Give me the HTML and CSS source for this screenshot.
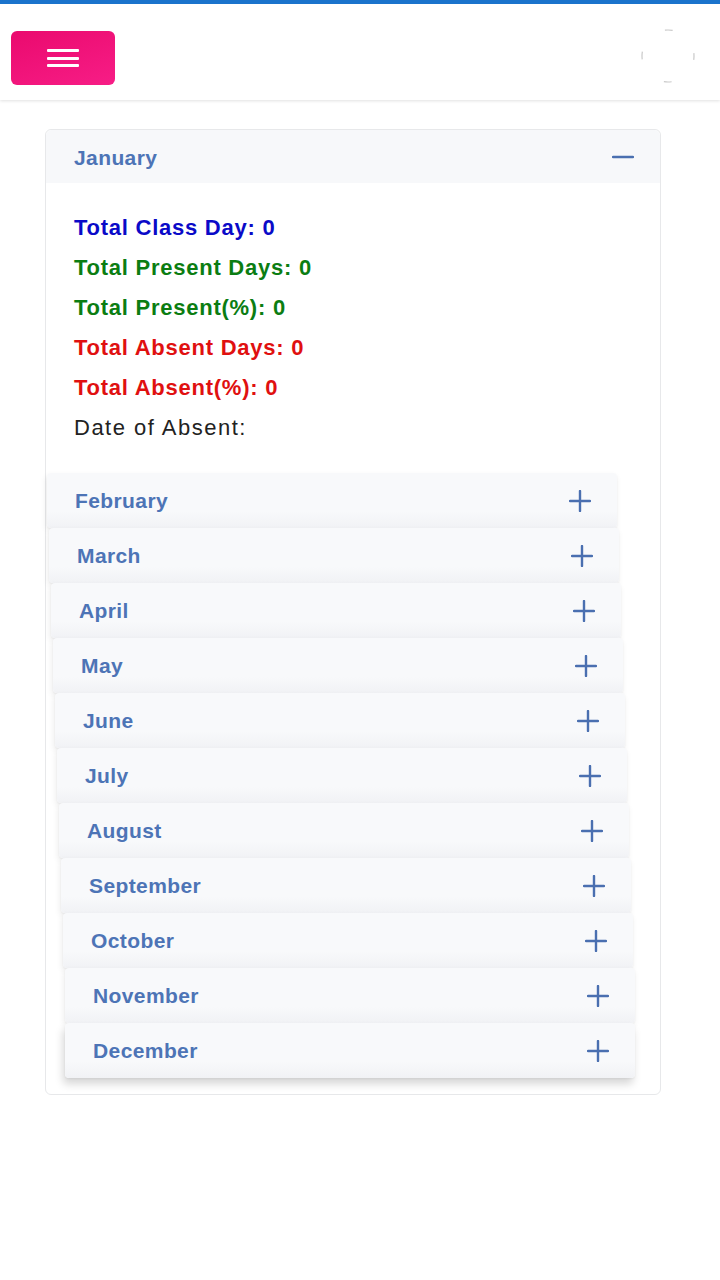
FILE: index.html
```html
<!DOCTYPE html>
<html lang="en">

<head>
    <meta charset="UTF-8">
    <meta name="viewport" content="width=device-width, initial-scale=1.0">
    <title>Attendance</title>
    <link rel="stylesheet" href="styles.css">
</head>

<body>
    <!-- top bar -->
    <header class="topbar">
        <button class="menu-btn" aria-label="menu">
            <span></span><span></span><span></span>
        </button>
        <div class="avatar">
            <svg width="56" height="56" viewBox="0 0 56 56">
                <circle cx="28" cy="28" r="26" fill="none" stroke="#c9c9c9" stroke-width="1.2"
                    stroke-dasharray="8 32.84" stroke-dashoffset="4"></circle>
            </svg>
        </div>
    </header>

    <main class="content">
        <div class="card">
            <div class="card-header">
                <span class="month-name">January</span>
                <svg class="icon" width="22" height="22" viewBox="0 0 22 22">
                    <path d="M1 11h20" stroke="#4a6fb0" stroke-width="2.4" stroke-linecap="round"></path>
                </svg>
            </div>
            <div class="card-body">
                <p class="stat blue">Total Class Day: 0</p>
                <p class="stat green">Total Present Days: 0</p>
                <p class="stat green">Total Present(%): 0</p>
                <p class="stat red">Total Absent Days: 0</p>
                <p class="stat red">Total Absent(%): 0</p>
                <p class="stat plain">Date of Absent:</p>
            </div>

            <!-- other months -->
            <div class="months">
                <div class="month"><span class="month-name">February</span><svg class="icon" width="22" height="22" viewBox="0 0 22 22"><path d="M1 11h20M11 1v20" stroke="#4a6fb0" stroke-width="2.4" stroke-linecap="round"></path></svg></div>
                <div class="month"><span class="month-name">March</span><svg class="icon" width="22" height="22" viewBox="0 0 22 22"><path d="M1 11h20M11 1v20" stroke="#4a6fb0" stroke-width="2.4" stroke-linecap="round"></path></svg></div>
                <div class="month"><span class="month-name">April</span><svg class="icon" width="22" height="22" viewBox="0 0 22 22"><path d="M1 11h20M11 1v20" stroke="#4a6fb0" stroke-width="2.4" stroke-linecap="round"></path></svg></div>
                <div class="month"><span class="month-name">May</span><svg class="icon" width="22" height="22" viewBox="0 0 22 22"><path d="M1 11h20M11 1v20" stroke="#4a6fb0" stroke-width="2.4" stroke-linecap="round"></path></svg></div>
                <div class="month"><span class="month-name">June</span><svg class="icon" width="22" height="22" viewBox="0 0 22 22"><path d="M1 11h20M11 1v20" stroke="#4a6fb0" stroke-width="2.4" stroke-linecap="round"></path></svg></div>
                <div class="month"><span class="month-name">July</span><svg class="icon" width="22" height="22" viewBox="0 0 22 22"><path d="M1 11h20M11 1v20" stroke="#4a6fb0" stroke-width="2.4" stroke-linecap="round"></path></svg></div>
                <div class="month"><span class="month-name">August</span><svg class="icon" width="22" height="22" viewBox="0 0 22 22"><path d="M1 11h20M11 1v20" stroke="#4a6fb0" stroke-width="2.4" stroke-linecap="round"></path></svg></div>
                <div class="month"><span class="month-name">September</span><svg class="icon" width="22" height="22" viewBox="0 0 22 22"><path d="M1 11h20M11 1v20" stroke="#4a6fb0" stroke-width="2.4" stroke-linecap="round"></path></svg></div>
                <div class="month"><span class="month-name">October</span><svg class="icon" width="22" height="22" viewBox="0 0 22 22"><path d="M1 11h20M11 1v20" stroke="#4a6fb0" stroke-width="2.4" stroke-linecap="round"></path></svg></div>
                <div class="month"><span class="month-name">November</span><svg class="icon" width="22" height="22" viewBox="0 0 22 22"><path d="M1 11h20M11 1v20" stroke="#4a6fb0" stroke-width="2.4" stroke-linecap="round"></path></svg></div>
                <div class="month"><span class="month-name">December</span><svg class="icon" width="22" height="22" viewBox="0 0 22 22"><path d="M1 11h20M11 1v20" stroke="#4a6fb0" stroke-width="2.4" stroke-linecap="round"></path></svg></div>
            </div>
        </div>
    </main>
</body>

</html>
```

FILE: styles.css
```css
* {
    margin: 0;
    padding: 0;
    box-sizing: border-box;
}

body {
    background: #fff;
    font-family: "Liberation Sans", Arial, sans-serif;
    color: #222;
}

.topbar {
    height: 100px;
    border-top: 4px solid #1a73cc;
    display: flex;
    justify-content: space-between;
    align-items: flex-start;
    padding: 27px 24px 0 11px;
    box-shadow: 0 1px 3px rgba(0, 0, 0, 0.12);
}

.menu-btn {
    width: 104px;
    height: 54px;
    border: none;
    border-radius: 6px;
    background: linear-gradient(160deg, #ea0a6e, #f71d86);
    display: flex;
    flex-direction: column;
    align-items: center;
    justify-content: center;
    gap: 4.5px;
}

.menu-btn span {
    display: block;
    width: 32px;
    height: 3px;
    background: #fff;
    border-radius: 1px;
}

.avatar {
    margin-top: -3px;
    width: 56px;
    height: 56px;
}

.content {
    padding: 29px 0 0 45px;
}

.card {
    width: 616px;
    border: 1px solid #e7e8ea;
    border-radius: 6px;
    padding-bottom: 16px;
}

.card-header {
    height: 53px;
    background: #f7f8fa;
    border-radius: 6px 6px 0 0;
    display: flex;
    align-items: center;
    justify-content: space-between;
    padding: 0 26px 0 28px;
}

.month-name {
    font-size: 21px;
    font-weight: bold;
    color: #4d74b6;
    letter-spacing: 0.4px;
}

.card-header .month-name {
    margin-top: 2px;
}

.icon {
    display: block;
}

.card-body {
    padding: 25px 28px 25px 28px;
}

.stat {
    font-size: 22px;
    line-height: 40px;
    font-weight: bold;
    letter-spacing: 0.75px;
}

.blue {
    color: #0a0ac8;
}

.green {
    color: #0b7d12;
}

.red {
    color: #e01010;
}

.plain {
    font-weight: normal;
    color: #222;
    letter-spacing: 1.5px;
}

.months {
    display: flex;
    flex-direction: column;
}

.month {
    width: 570px;
    height: 55px;
    background: linear-gradient(#f8f9fb 70%, #f1f2f5);
    border-radius: 4px;
    display: flex;
    align-items: center;
    justify-content: space-between;
    padding: 0 26px 0 28px;
    box-shadow: -1px 3px 6px rgba(0, 0, 0, 0.08), 0 1px 2px rgba(0, 0, 0, 0.05);
}

.month:last-child {
    box-shadow: -2px 6px 8px rgba(0, 0, 0, 0.16), 0 1px 2px rgba(0, 0, 0, 0.05);
}

.month:nth-child(1) { margin-left: 1px; }
.month:nth-child(2) { margin-left: 3px; }
.month:nth-child(3) { margin-left: 5px; }
.month:nth-child(4) { margin-left: 7px; }
.month:nth-child(5) { margin-left: 9px; }
.month:nth-child(6) { margin-left: 11px; }
.month:nth-child(7) { margin-left: 13px; }
.month:nth-child(8) { margin-left: 15px; }
.month:nth-child(9) { margin-left: 17px; }
.month:nth-child(10) { margin-left: 19px; }
.month:nth-child(11) { margin-left: 19px; }
```
